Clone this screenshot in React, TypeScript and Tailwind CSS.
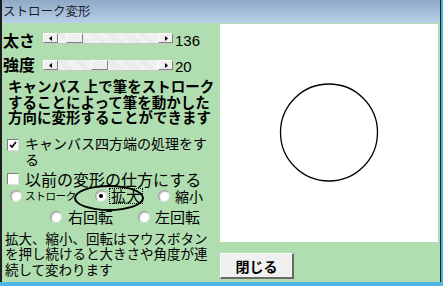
import React from 'react';

const jp = { fontFamily: '"Noto Sans CJK JP", "Noto Sans", sans-serif' };

const Arrow = ({ dir }: { dir: 'left' | 'right' }) => (
  <div className="w-[15px] h-full bg-[#f0f0f0] border-t border-l border-t-white border-l-white border-b border-r border-b-[#808080] border-r-[#808080] flex items-center justify-center">
    <svg width="4" height="5" viewBox="0 0 4 5">
      {dir === 'left' ? <polygon points="3,0 3,5 0,2.5" fill="#000" /> : <polygon points="1,0 1,5 4,2.5" fill="#000" />}
    </svg>
  </div>
);

const Slider = ({ thumb }: { thumb: number }) => (
  <div className="flex w-[130px] h-[11px] bg-[#f4f4f4] border-b border-[#c8c8c8]">
    <Arrow dir="left" />
    <div className="flex-1 flex bg-[repeating-linear-gradient(45deg,#f7f7f7_0px,#f7f7f7_1px,#e6e6e6_1px,#e6e6e6_2px)]">
      <div style={{ marginLeft: thumb }} className="w-[17px] h-full bg-[#f0f0f0] border-t border-l border-t-white border-l-white border-b border-r border-b-[#808080] border-r-[#808080]" />
    </div>
    <Arrow dir="right" />
  </div>
);

const Checkbox = ({ checked }: { checked?: boolean }) => (
  <div className="w-[12px] h-[12px] bg-white border-t border-l border-t-[#808080] border-l-[#808080] border-b border-r border-b-[#e0e0e0] border-r-[#e0e0e0] flex items-center justify-center shrink-0">
    {checked && (
      <svg width="8" height="8" viewBox="0 0 8 8">
        <polyline points="1,4 3,6 7,1" fill="none" stroke="#000" strokeWidth="1.6" />
      </svg>
    )}
  </div>
);

const Radio = ({ checked }: { checked?: boolean }) => (
  <div className="w-[12px] h-[12px] rounded-full bg-white border border-t-[#9a9a9a] border-l-[#9a9a9a] border-b-[#dcdcdc] border-r-[#dcdcdc] shadow-[inset_1px_1px_1px_#c0c0c0] flex items-center justify-center shrink-0">
    {checked && <div className="w-[4px] h-[4px] rounded-full bg-black" />}
  </div>
);

export default function App() {
  return (
    <div className="w-[443px] h-[286px] bg-[#4fb6e6] pr-[2px] pb-[4px]" style={jp}>
      <div className="h-full flex flex-col bg-[#b1deb0] border-l-2 border-r border-[#1e1e1e]">
        <div className="h-[23px] shrink-0 bg-gradient-to-b from-[#8fa8c6] to-[#b9d0e7] flex items-center pl-[1px]">
          <span className="text-[12.5px] leading-none text-[#1a1f2e]">ストローク変形</span>
        </div>
        <div className="flex flex-1">
          <div className="w-[218px] flex flex-col text-black">
            <div className="mt-[7px] h-[24px] flex items-start">
              <span className="w-[41px] pl-[1px] mt-[2px] text-[16px] leading-[16px] font-bold">太さ</span>
              <div className="mt-[3px]">
                <Slider thumb={8} />
              </div>
              <span className="ml-[2px] mt-[2px] text-[15px] leading-[18px]" style={{ fontFamily: '"Liberation Sans", sans-serif' }}>136</span>
            </div>
            <div className="h-[22px] flex items-start">
              <span className="w-[41px] pl-[1px] mt-[2px] text-[16px] leading-[16px] font-bold">強度</span>
              <div className="mt-[6px]">
                <Slider thumb={33} />
              </div>
              <span className="ml-[2px] mt-[4px] text-[15px] leading-[18px]" style={{ fontFamily: '"Liberation Sans", sans-serif' }}>20</span>
            </div>
            <p className="mt-[2px] pl-[6px] text-[14.5px] leading-[15.5px] font-bold whitespace-nowrap">
              キャンバス 上で筆をストローク
              <br />
              することによって筆を動かした
              <br />
              方向に変形することができます
            </p>
            <div className="mt-[10px] flex items-start pl-[5px]">
              <div className="mt-[4px]">
                <Checkbox checked />
              </div>
              <span className="ml-[6px] text-[14px] leading-[16.5px] whitespace-nowrap">
                キャンバス四方端の処理をす
                <br />
                る
              </span>
            </div>
            <div className="mt-[2px] flex items-start pl-[5px]">
              <div className="mt-[3px]">
                <Checkbox />
              </div>
              <span className="ml-[6px] text-[16px] leading-[18px] whitespace-nowrap">以前の変形の仕方にする</span>
            </div>
            <div className="relative h-[17px] flex items-center">
              <div className="ml-[8px]">
                <Radio />
              </div>
              <span className="ml-[3px] text-[10.5px] leading-none tracking-[-0.3px]">ストローク</span>
              <div className="ml-[19px]">
                <Radio checked />
              </div>
              <span className="ml-[2px] px-[1px] border border-dotted border-black text-[15px] leading-[14px]">拡大</span>
              <div className="ml-[15px]">
                <Radio />
              </div>
              <span className="ml-[5px] text-[14px] leading-none">縮小</span>
              <div className="absolute left-[72px] top-[-3px] w-[70px] h-[26px] rounded-[50%] border-2 border-black" />
            </div>
            <div className="mt-[1px] h-[22px] flex items-center">
              <div className="ml-[48px]">
                <Radio />
              </div>
              <span className="ml-[6px] text-[15px] leading-none">右回転</span>
              <div className="ml-[25px]">
                <Radio />
              </div>
              <span className="ml-[5px] text-[15px] leading-none">左回転</span>
            </div>
            <p className="mt-[3px] pl-[3px] text-[13.5px] leading-[15.75px] whitespace-nowrap">
              拡大、縮小、回転はマウスボタン
              <br />
              を押し続けると大きさや角度が連
              <br />
              続して変わります
            </p>
          </div>
          <div className="w-[218px] flex flex-col">
            <div className="mt-[1px] h-[218px] bg-white">
              <svg width="218" height="218" viewBox="0 0 218 218">
                <circle cx="109" cy="108.5" r="48.5" fill="none" stroke="#000" strokeWidth="1.3" />
              </svg>
            </div>
            <button className="mt-[11px] w-[74px] h-[26px] bg-[#f0f0f0] border-t border-l border-t-white border-l-white border-b-2 border-r-2 border-b-[#6a6a6a] border-r-[#6a6a6a] text-[14px] font-bold leading-none text-black flex items-center justify-center">
              閉じる
            </button>
          </div>
        </div>
      </div>
    </div>
  );
}
